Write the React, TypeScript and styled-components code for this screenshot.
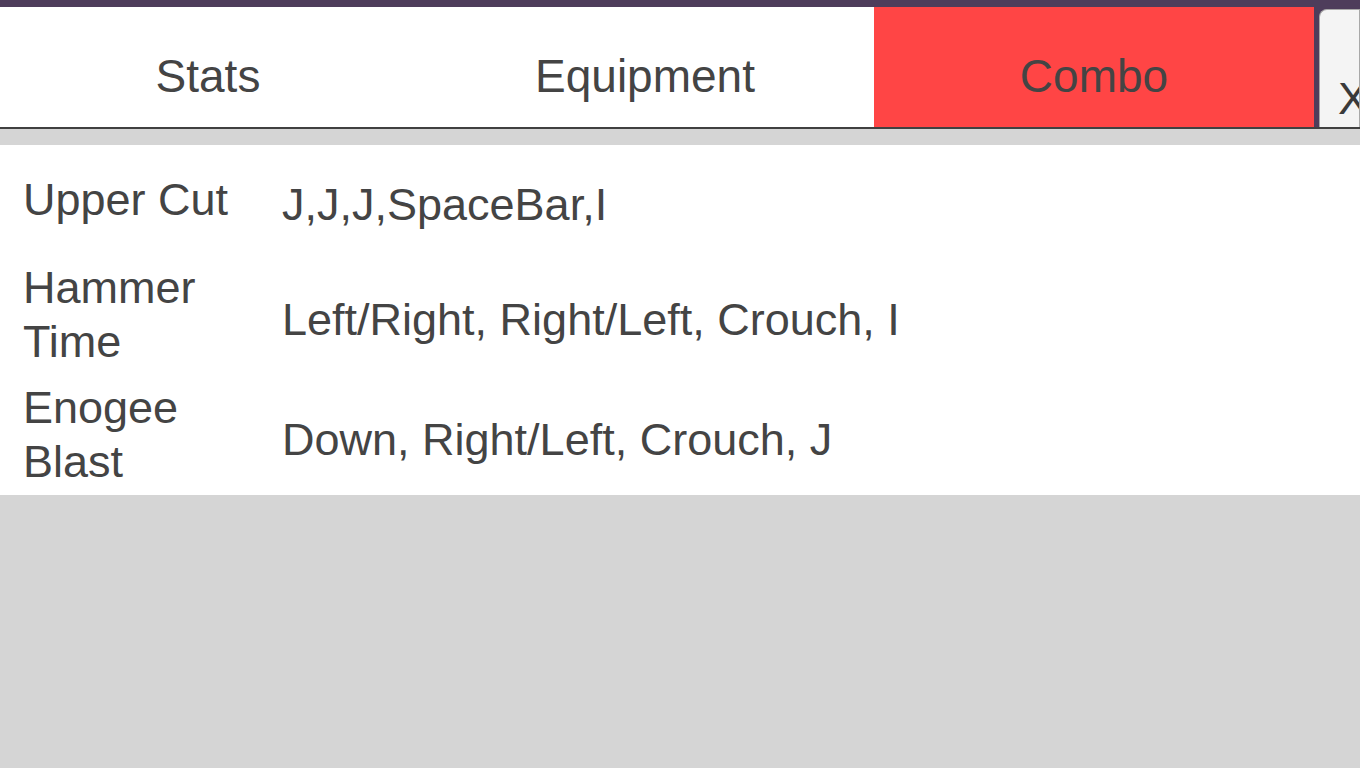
import React from 'react';
import styled, { createGlobalStyle } from 'styled-components';

const GlobalStyle = createGlobalStyle`
  html, body {
    margin: 0;
    padding: 0;
    background: #d5d5d5;
    font-family: 'Liberation Sans', Arial, sans-serif;
    color: #444;
  }
`;

const Header = styled.div`
  display: flex;
  padding-top: 7px;
  background: #4e3d5b;
  border-bottom: 2px solid #404040;
`;

const TabBar = styled.div`
  display: grid;
  grid-template-columns: 416px 458px 440px;
  height: 120px;
`;

const Tab = styled.div<{ $active?: boolean }>`
  display: flex;
  justify-content: center;
  align-items: center;
  padding-top: 17px;
  box-sizing: border-box;
  background: ${(p) => (p.$active ? '#ff4545' : '#ffffff')};
  font-size: 46px;
  color: #444;
  cursor: pointer;
`;

const CloseButton = styled.div`
  flex: 1;
  margin: 2px 0 0 5px;
  display: flex;
  align-items: flex-end;
  padding: 0 0 6px 18px;
  background: #f4f4f4;
  border: 1px solid #a8a8a8;
  border-bottom: none;
  border-top-left-radius: 8px;
  font-size: 45px;
  line-height: 44px;
  color: #3a3a3a;
  overflow: hidden;
`;

const ComboTable = styled.div`
  margin-top: 16px;
  background: #ffffff;
`;

const Row = styled.div`
  display: grid;
  grid-template-columns: 282px 1fr;
  align-items: center;
  min-height: 110px;
  padding: 6px 0;
  box-sizing: border-box;
  font-size: 45px;
  line-height: 54px;
`;

const Label = styled.div`
  padding: 0 20px 0 23px;
`;

const Keys = styled.div`
  padding-top: 10px;
  white-space: nowrap;
`;

const combos = [
  { name: 'Upper Cut', keys: 'J,J,J,SpaceBar,I' },
  { name: 'Hammer Time', keys: 'Left/Right, Right/Left, Crouch, I' },
  { name: 'Enogee Blast', keys: 'Down, Right/Left, Crouch, J' },
];

export default function App() {
  return (
    <>
      <GlobalStyle />
      <Header>
        <TabBar>
          <Tab>Stats</Tab>
          <Tab>Equipment</Tab>
          <Tab $active>Combo</Tab>
        </TabBar>
        <CloseButton>X</CloseButton>
      </Header>
      <ComboTable>
        {combos.map((c) => (
          <Row key={c.name}>
            <Label>{c.name}</Label>
            <Keys>{c.keys}</Keys>
          </Row>
        ))}
      </ComboTable>
    </>
  );
}
